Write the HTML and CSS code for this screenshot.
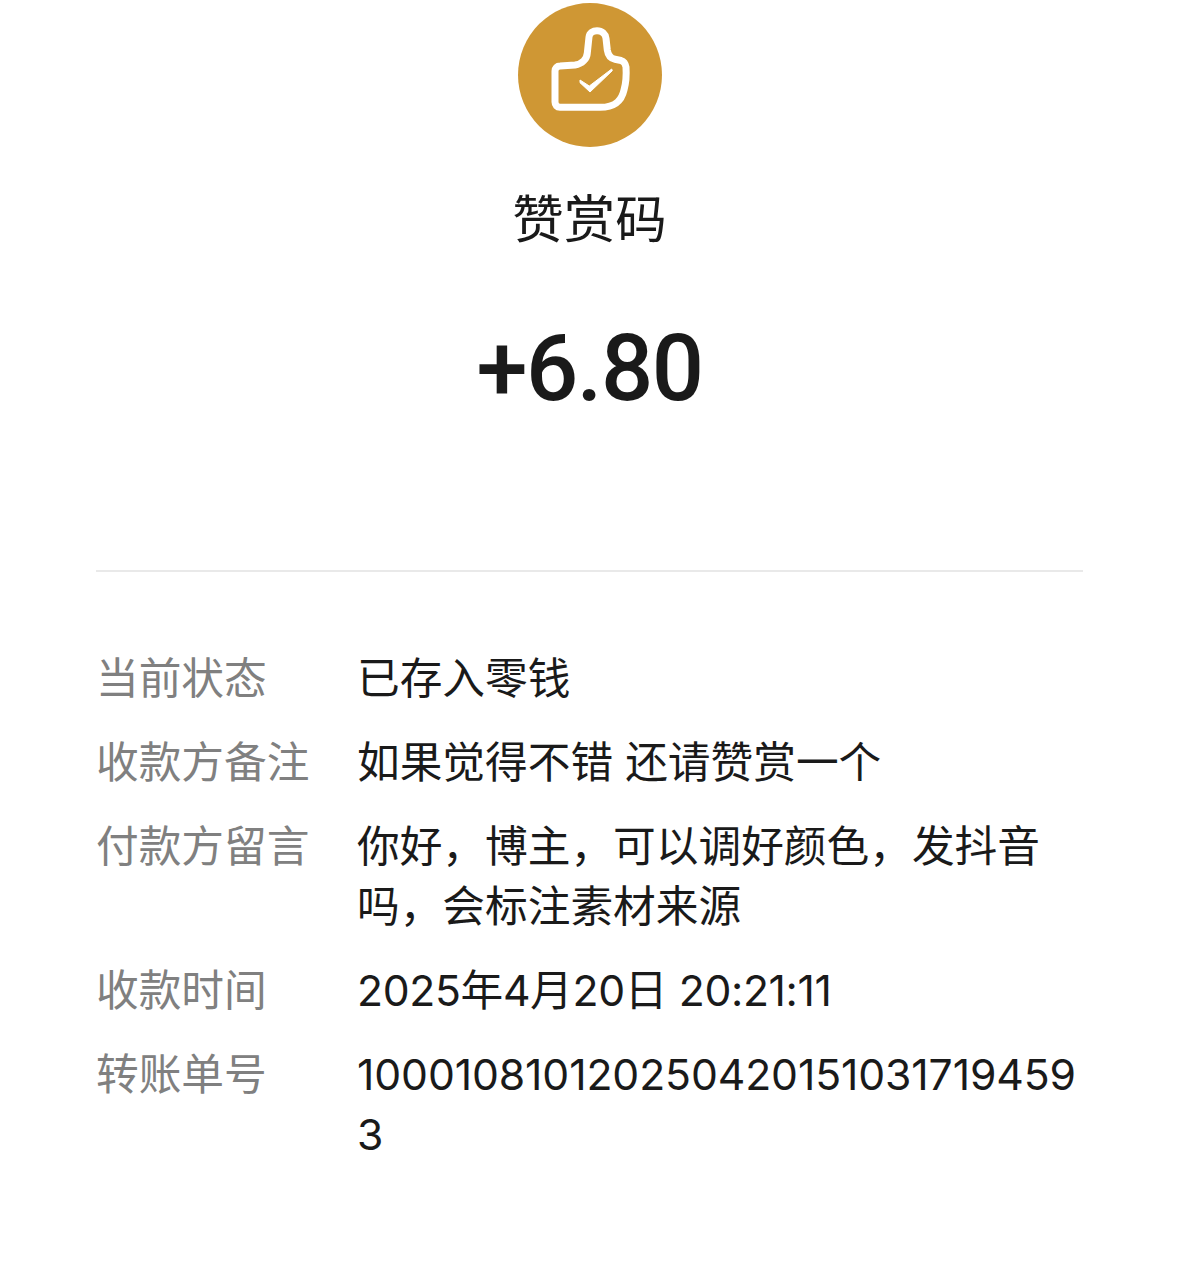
FILE: index.html
```html
<!DOCTYPE html>
<html lang="zh-CN">
<head>
    <meta charset="UTF-8">
    <title>赞赏码</title>
    <link rel="stylesheet" href="styles.css">
</head>
<body>
    <div class="top">
        <div class="logo">
            <svg width="144" height="144" viewBox="0 0 144 144" fill="none">
                <path d="M37 68 C37 65 39 63 42 63 L57 62 C64 61 69 56 69.300 50 L71 34 C71.500 30 75 27.700 79 27.700 C84 27.700 87.500 31 88 35.300 L89.300 47 C90 52 93 55.500 97 56.300 L103 57.500 C106 58.500 107.500 61 108 64 C108.500 72 108 80 106 87 C104 96 98.700 104.300 82 104.300 L42 104.300 C39 104.300 37 102 37 99 Z" stroke="#fff" stroke-width="7" stroke-linejoin="round"/>
                <path d="M62 77 L71.300 83 L93.700 66 L94.300 67.700 L72 89 L62 79.700 Z" fill="#fff" stroke="#fff" stroke-width="1" stroke-linejoin="round"/>
            </svg>
        </div>
        <div class="name">赞赏码</div>
        <div class="amount">+6.80</div>
    </div>
    <div class="line"></div>
    <div class="rows">
        <div class="row"><div class="label">当前状态</div><div class="value">已存入零钱</div></div>
        <div class="row"><div class="label">收款方备注</div><div class="value">如果觉得不错 还请赞赏一个</div></div>
        <div class="row"><div class="label">付款方留言</div><div class="value">你好，博主，可以调好颜色，发抖音吗，会标注素材来源</div></div>
        <div class="row"><div class="label">收款时间</div><div class="value time">2025年4月20日 20:21:11</div></div>
        <div class="row"><div class="label">转账单号</div><div class="value number">100010810120250420151031719459 3</div></div>
    </div>
</body>
</html>
```

FILE: styles.css
```css
body {
    margin: 0;
    background-color: #fff;
    font-family: Inter, "Noto Sans CJK SC", sans-serif;
    overflow: hidden;
}
.top {
    display: flex;
    flex-direction: column;
    align-items: center;
    padding-top: 3px;
}
.logo {
    width: 144px;
    height: 144px;
    border-radius: 50%;
    background-color: #cf9734;
}
.logo svg {
    display: block;
}
.name {
    margin-top: 39px;
    font-family: "Noto Sans CJK SC", sans-serif;
    font-size: 51.500px;
    line-height: 60px;
    color: #1a1a1a;
}
.amount {
    margin-top: 68px;
    font-family: Roboto, sans-serif;
    font-size: 92px;
    line-height: 110px;
    font-weight: 500;
    letter-spacing: -1.500px;
    color: #1a1a1a;
}
.line {
    margin: 146px 96px 0;
    height: 2px;
    background-color: #e9e9e9;
}
.rows {
    margin: 77px 96px 0;
}
.row {
    display: flex;
    font-size: 42.700px;
    line-height: 60px;
    margin-bottom: 24px;
    color: #1a1a1a;
}
.label {
    width: 261px;
    flex-shrink: 0;
    color: #808080;
}
.value {
    flex: 1;
    word-break: break-all;
}
.time {
    letter-spacing: -0.350px;
}
.number {
    letter-spacing: -0.110px;
}
```
